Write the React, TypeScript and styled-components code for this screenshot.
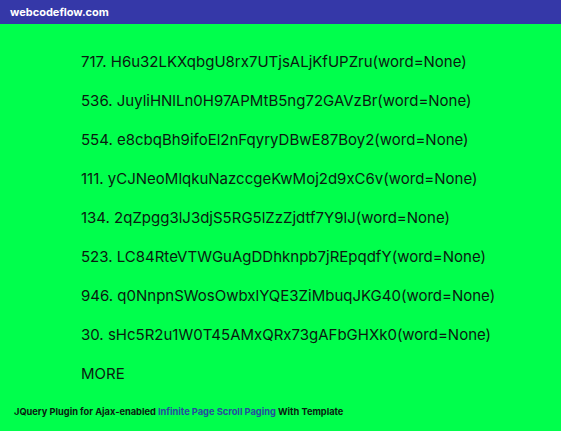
import React from "react";
import styled, { createGlobalStyle } from "styled-components";

const GlobalStyle = createGlobalStyle`
  html, body {
    margin: 0;
    padding: 0;
    background: #00ff4c;
    font-family: Inter, "Noto Sans", sans-serif;
  }
`;

const Page = styled.div`
  width: 561px;
  height: 431px;
  display: flex;
  flex-direction: column;
  background: #00ff4c;
  overflow: hidden;
`;

const TopBar = styled.div`
  height: 24px;
  background: #3538a8;
  display: flex;
  align-items: center;
  padding-left: 10px;
  color: #fff;
  font-weight: 700;
  font-size: 11px;
`;

const List = styled.div`
  display: flex;
  flex-direction: column;
  gap: 20px;
  padding: 28px 0 0 81px;
`;

const Item = styled.div`
  font-size: 15px;
  line-height: 19px;
  color: #0a1a10;
`;

const Footer = styled.div`
  margin-top: 23px;
  padding-left: 14px;
  font-size: 9.25px;
  font-weight: 700;
  color: #0a1a10;
`;

const FooterLink = styled.a`
  color: #2848a0;
  text-decoration: none;
`;

const items = [
  "717. H6u32LKXqbgU8rx7UTjsALjKfUPZru(word=None)",
  "536. JuyliHNlLn0H97APMtB5ng72GAVzBr(word=None)",
  "554. e8cbqBh9ifoEl2nFqyryDBwE87Boy2(word=None)",
  "111. yCJNeoMlqkuNazccgeKwMoj2d9xC6v(word=None)",
  "134. 2qZpgg3lJ3djS5RG5lZzZjdtf7Y9lJ(word=None)",
  "523. LC84RteVTWGuAgDDhknpb7jREpqdfY(word=None)",
  "946. q0NnpnSWosOwbxlYQE3ZiMbuqJKG40(word=None)",
  "30. sHc5R2u1W0T45AMxQRx73gAFbGHXk0(word=None)",
  "MORE",
];

export default function App() {
  return (
    <Page>
      <GlobalStyle />
      <TopBar>webcodeflow.com</TopBar>
      <List>
        {items.map((t) => (
          <Item key={t}>{t}</Item>
        ))}
      </List>
      <Footer>
        JQuery Plugin for Ajax-enabled <FooterLink href="#">Infinite Page Scroll Paging</FooterLink> With Template
      </Footer>
    </Page>
  );
}
